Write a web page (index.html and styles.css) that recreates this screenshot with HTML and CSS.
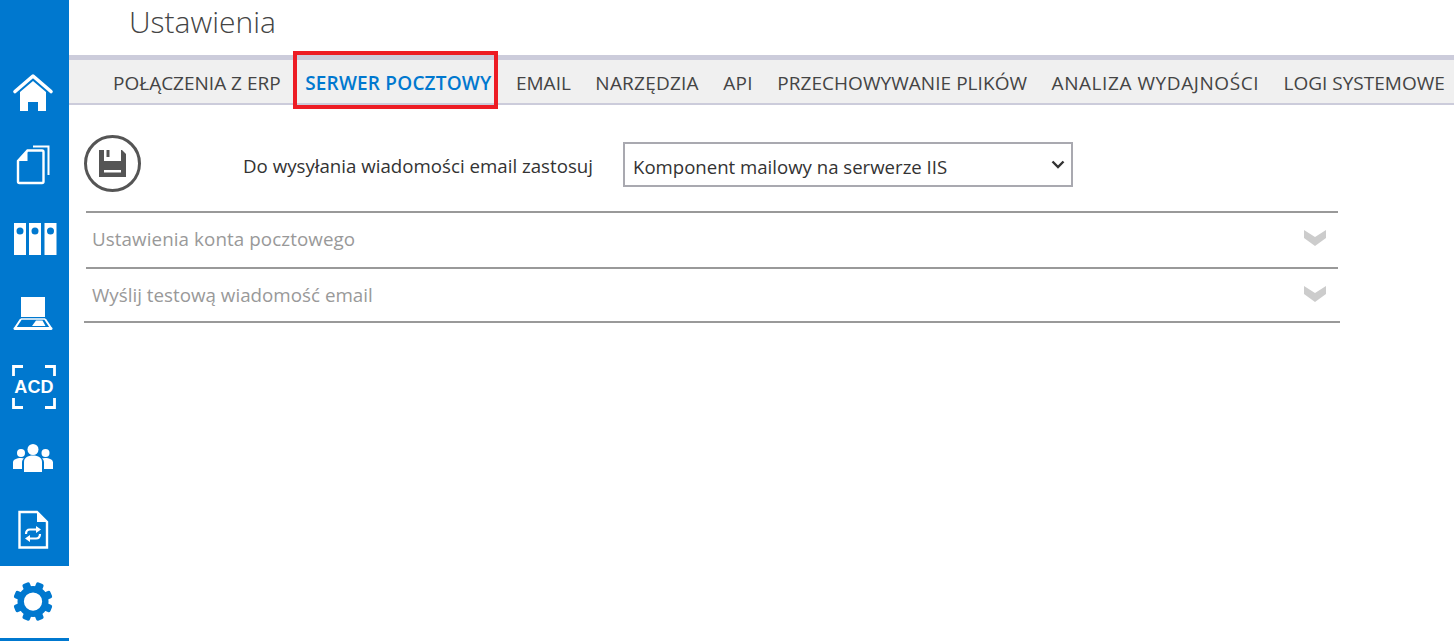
FILE: index.html
```html
<!DOCTYPE html>
<html lang="pl">
<head>
<meta charset="utf-8">
<title>Ustawienia</title>
<link rel="stylesheet" href="styles.css">
</head>
<body>
<div class="app">
  <nav class="sidebar">
    <a class="nav-item"><svg class="nav-icon" viewBox="0 0 69 73"><path d="M15 36.500 33 21l18 15.500" fill="none" stroke="#fff" stroke-width="3.600" stroke-linecap="round" stroke-linejoin="round"/><path d="M20 37 33 26l13 11v19H38v-9H28v9h-8z" fill="#fff"/></svg></a>
    <a class="nav-item"><svg class="nav-icon" viewBox="0 0 69 73"><path d="M33 18.500h15.500V47" fill="none" stroke="#fff" stroke-width="2"/><path d="M27.500 22.500H42a1.500 1.500 0 0 1 1.500 1.500v29.500A1.500 1.500 0 0 1 42 55H19.500a1.500 1.500 0 0 1-1.500-1.500V33z" fill="none" stroke="#fff" stroke-width="2.400"/><path d="M18 33h9.500V23z" fill="#fff"/></svg></a>
    <a class="nav-item"><svg class="nav-icon" viewBox="0 0 69 73"><g fill="#fff" fill-rule="evenodd"><path d="M14 22h12v32H14zM20 26.500a3.500 3.500 0 1 0 0 7 3.500 3.500 0 0 0 0-7z"/><path d="M29 22h12v32H29zM35 26.500a3.500 3.500 0 1 0 0 7 3.500 3.500 0 0 0 0-7z"/><path d="M44.500 22h12v32h-12zM50.500 26.500a3.500 3.500 0 1 0 0 7 3.500 3.500 0 0 0 0-7z"/></g></svg></a>
    <a class="nav-item"><svg class="nav-icon" viewBox="0 0 69 73"><path fill="#fff" d="M21 23h24v20H21z"/><path d="M21 45 15 54M45 45l6 9" fill="none" stroke="#fff" stroke-width="2"/><path d="M21 45h24" stroke="#fff" stroke-width="1.500"/><path d="M15 54.500h36" stroke="#fff" stroke-width="3" stroke-linecap="round"/><path fill="#fff" d="M36 46.500h6.500l3 5.500H32z"/></svg></a>
    <a class="nav-item"><svg class="nav-icon" viewBox="0 0 69 73"><path d="M23 19.500H13.500V29M45 19.500h9.500V29M23 60.500H13.500V51M45 60.500h9.500V51" fill="none" stroke="#fff" stroke-width="2.800"/></svg><span class="acd-text">ACD</span></a>
    <a class="nav-item"><svg class="nav-icon" viewBox="0 0 69 73"><g fill="#fff"><circle cx="33" cy="29.500" r="5.500"/><path d="M24 52V42c0-4 3.500-6.500 9-6.500s9 2.500 9 6.500v10z"/><circle cx="21" cy="33" r="4"/><circle cx="45.500" cy="33" r="4"/><path d="M13 49v-6.500c0-3 3.500-4.500 8-4.500 1.300 0 2.300.2 3 .5-1.500 1-2 2.500-2 4V49zM53 49v-6.500c0-3-3.500-4.500-8-4.500-1.300 0-2.300.2-3 .5 1.500 1 2 2.500 2 4V49z"/></g></svg></a>
    <a class="nav-item"><svg class="nav-icon" viewBox="0 0 69 73"><path d="M19.500 19H37l10 10v25.500H19.500z" fill="none" stroke="#fff" stroke-width="2.400"/><path d="M37 19.500V29h9.500z" fill="#fff"/><path d="M26 41c0-3 1.500-4.500 4-4.500h7M40 41c0 3-1.500 4.500-4 4.500h-7" fill="none" stroke="#fff" stroke-width="2.200"/><path fill="#fff" d="M36 33l5 3.500-5 3.500zM30 42l-5 3.500 5 3.500z"/></svg></a>
    <a class="nav-item nav-active"><svg class="nav-icon" viewBox="0 0 69 73"><g transform="translate(33 36)" fill="#0078cf"><circle r="12.500" fill="none" stroke="#0078cf" stroke-width="6.500"/><rect x="-4" y="-20" width="8" height="8" rx="2" transform="rotate(22.500)"/><rect x="-4" y="-20" width="8" height="8" rx="2" transform="rotate(67.500)"/><rect x="-4" y="-20" width="8" height="8" rx="2" transform="rotate(112.500)"/><rect x="-4" y="-20" width="8" height="8" rx="2" transform="rotate(157.500)"/><rect x="-4" y="-20" width="8" height="8" rx="2" transform="rotate(202.500)"/><rect x="-4" y="-20" width="8" height="8" rx="2" transform="rotate(247.500)"/><rect x="-4" y="-20" width="8" height="8" rx="2" transform="rotate(292.500)"/><rect x="-4" y="-20" width="8" height="8" rx="2" transform="rotate(337.500)"/></g></svg></a>
  </nav>
  <main class="main">
    <header class="page-head"><h1 class="page-title">Ustawienia</h1></header>
    <div class="tabs">
      <a class="tab">POŁĄCZENIA Z ERP</a>
      <a class="tab tab-active">SERWER POCZTOWY</a>
      <a class="tab">EMAIL</a>
      <a class="tab tab-wide">NARZĘDZIA</a>
      <a class="tab tab-wide">API</a>
      <a class="tab tab-slight">PRZECHOWYWANIE PLIKÓW</a>
      <a class="tab tab-widest">ANALIZA WYDAJNOŚCI</a>
      <a class="tab">LOGI SYSTEMOWE</a>
      <span class="highlight"></span>
    </div>
    <section class="content">
      <div class="toolbar">
        <button class="save-btn" type="button" aria-label="Zapisz"><svg width="27" height="27" viewBox="0 0 27 27"><path fill="#555" fill-rule="evenodd" d="M0 0h5v11h17V0h1l4 4v23H0zM5 20v2.500h17V20z"/><path fill="#555" d="M7.500 0h3v7h-3z"/></svg></button>
        <label class="mail-label">Do wysyłania wiadomości email zastosuj</label>
        <div class="select-wrap">
          <select class="mail-select"><option>Komponent mailowy na serwerze IIS</option></select>
          <svg class="select-arrow" width="14" height="9" viewBox="0 0 14 9"><path d="M1.500 1.500 7 7l5.500-5.500" fill="none" stroke="#333" stroke-width="2.400"/></svg>
        </div>
      </div>
      <div class="accordion">
        <div class="acc-row acc-first"><span class="acc-title">Ustawienia konta pocztowego</span><svg width="22" height="16" viewBox="0 0 22 16"><path d="M0 0 11 7 22 0V8L11 16 0 8z" fill="#ccc"/></svg></div>
        <div class="acc-row acc-last"><span class="acc-title">Wyślij testową wiadomość email</span><svg width="22" height="16" viewBox="0 0 22 16"><path d="M0 0 11 7 22 0V8L11 16 0 8z" fill="#ccc"/></svg></div>
      </div>
    </section>
  </main>
</div>
</body>
</html>
```
FILE: styles.css
```css
* { box-sizing: border-box; }
html, body { margin: 0; height: 100%; background: #fff; overflow: hidden; }
body { font-family: "Open Sans", "Noto Sans", "Liberation Sans", sans-serif; color: #333; }

.app { display: flex; height: 641px; }

.sidebar { width: 69px; flex: none; display: flex; flex-direction: column; padding-top: 55px; background: #0078cf; }
.nav-item { height: 73px; flex: none; position: relative; display: block; }
.nav-icon { display: block; width: 69px; height: 73px; }
.nav-active { height: 72px; background: #fff; }
.nav-active .nav-icon { height: 72px; overflow: visible; }
.acd-text { position: absolute; left: 0; right: 0; top: 28px; text-align: center; color: #fff; font: 700 18px/24px "Liberation Sans", sans-serif; letter-spacing: .2px; transform: translateX(-.5px); }

.main { flex: 1; min-width: 0; }
.page-head { height: 55px; padding-left: 60px; }
.page-title { margin: 0; font-size: 30px; font-weight: 300; line-height: 44px; color: #444; }

.tabs { position: relative; height: 50px; display: flex; align-items: center; gap: 24.5px; padding: 3px 0 0 44px; background: #f0f0f0; border-top: 5px solid #ccccdb; border-bottom: 2px solid #ccccdb; white-space: nowrap; }
.tab { font-size: 19px; color: #444; }
.tab-active { color: #0078cf; font-weight: 600; letter-spacing: .2px; }
.tab-wide { letter-spacing: .22px; }
.tab-slight { letter-spacing: .05px; }
.tab-widest { letter-spacing: .57px; }
.highlight { position: absolute; left: 224px; top: -9px; width: 205px; height: 58px; border: 4px solid #ed1c24; }

.content { padding: 30px 0 0 15px; width: 1271px; }
.toolbar { display: flex; align-items: center; height: 57px; }
.save-btn { width: 57px; height: 57px; flex: none; padding: 0; display: flex; align-items: center; justify-content: center; background: #fff; border: 3px solid #555; border-radius: 50%; }
.mail-label { margin: 4px 0 0 102px; width: 380px; font-size: 18.7px; color: #333; }
.select-wrap { position: relative; width: 450px; height: 45px; margin-top: 2px; }
.mail-select { width: 100%; height: 100%; appearance: none; padding: 3px 0 0 8px; background: #fff; border: 2px solid #a9a9b0; border-radius: 0; font: 18.6px "Open Sans", sans-serif; color: #333; }
.select-arrow { position: absolute; right: 8px; top: 18px; }

.accordion { margin: 19px 0 0 2px; width: 1252px; }
.acc-row { height: 56px; display: flex; align-items: center; justify-content: space-between; padding: 0 12px 4px 6px; border-top: 2px solid #999; font-size: 18.8px; color: #999; }
.acc-title { margin-top: 2px; }
.acc-first .acc-title { letter-spacing: .08px; }
.acc-last { height: 54px; padding-bottom: 3px; position: relative; }
.acc-last .acc-title { margin-top: 3px; }
.acc-last::after { content: ""; position: absolute; left: -2px; right: -2px; bottom: -2px; height: 2px; background: #999; }
```
